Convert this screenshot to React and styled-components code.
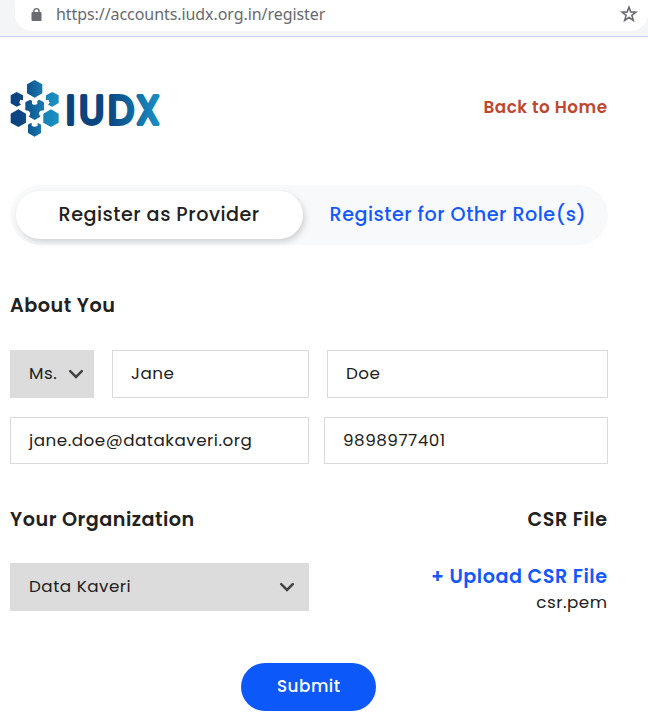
import React from "react";
import styled, { createGlobalStyle } from "styled-components";

const GlobalStyle = createGlobalStyle`
  *, *::before, *::after { box-sizing: border-box; }
  body {
    margin: 0;
    background: #fff;
    color: #212121;
    font-family: Poppins, Inter, sans-serif;
    overflow: hidden;
  }
  button { font: inherit; color: inherit; }
`;

const Page = styled.div`
  width: 648px;
  height: 716px;
  overflow: hidden;
`;

const BrowserBar = styled.div`
  height: 37px;
  padding-left: 15px;
  background: #f4f5f7;
  border-bottom: 1px solid #c7d2ea;
`;

const AddressField = styled.div`
  display: flex;
  align-items: flex-start;
  height: 31px;
  padding: 5px 10px 0 15px;
  background: #fff;
  border-radius: 0 0 17px 17px;
`;

const LockIcon = styled.svg`
  width: 13px;
  height: 16px;
  margin-top: 2px;
`;

const Url = styled.span`
  flex: 1;
  margin-left: 13px;
  font: 16px/19px "Noto Sans", sans-serif;
  letter-spacing: -0.07px;
  color: #666a70;
`;

const StarIcon = styled.svg`
  width: 18px;
  height: 18px;
`;

const Content = styled.main`
  width: 598px;
  margin-left: 10px;
`;

const Header = styled.header`
  display: flex;
  justify-content: space-between;
  align-items: center;
  height: 148px;
`;

const Logo = styled.svg`
  width: 155px;
  height: 66px;
  margin-top: -6px;
  overflow: visible;
`;

const Label = styled.span`
  display: inline-block;
  font-size: ${(p) => (p.$large ? 19.2 : 16.8)}px;
  font-weight: ${(p) => p.$weight || 400};
  line-height: 24px;
  letter-spacing: 0.5px;
  margin-right: -0.5px;
  white-space: nowrap;
`;

const HomeLink = styled.a`
  margin: -8px 1px 0 0;
  color: #bf4730;
`;

const Tabs = styled.nav`
  display: flex;
  height: 60px;
  padding: 6px;
  background: #f8f9fb;
  border-radius: 30px;
`;

const Tab = styled.div`
  display: flex;
  align-items: center;
  width: ${(p) => (p.$active ? 287 : 299)}px;
  padding-left: ${(p) => (p.$active ? 42.5 : 26.5)}px;
  height: 48px;
  border-radius: 24px;
  background: ${(p) => (p.$active ? "#fff" : "transparent")};
  color: ${(p) => (p.$active ? "#212121" : "#1358fa")};
  box-shadow: ${(p) => (p.$active ? "2px 3px 6px rgba(0, 0, 0, 0.16)" : "none")};
`;

const SectionHeading = styled.div`
  display: flex;
  justify-content: space-between;
  height: 24px;
  margin-top: ${(p) => p.$top}px;
  padding-right: 1px;
`;

const FieldRow = styled.div`
  display: grid;
  grid-template-columns: ${(p) => p.$columns};
  column-gap: ${(p) => p.$gap}px;
  margin-top: ${(p) => p.$top}px;
`;

const TextField = styled.div`
  display: flex;
  align-items: center;
  height: ${(p) => p.$height || 48}px;
  padding: 0 18px 2px;
  border: 1px solid #dadada;
`;

const SelectField = styled.div`
  display: flex;
  align-items: center;
  justify-content: space-between;
  height: 48px;
  padding: 0 ${(p) => p.$inset}px 2px 19px;
  background: #dcdcdc;
`;

const ChevronIcon = styled.svg`
  width: 16px;
  height: 10px;
  margin-top: 2px;
`;

const Upload = styled.div`
  display: flex;
  flex-direction: column;
  align-items: flex-end;
  height: 48px;
  padding: 2px 1px 0 0;
`;

const UploadLink = styled.a`
  height: 27px;
  color: #1358fa;
`;

const SubmitButton = styled.button`
  display: flex;
  align-items: center;
  justify-content: center;
  width: 135px;
  height: 48px;
  margin: 52px 0 0 231px;
  padding: 0 0 2px;
  border: 0;
  border-radius: 24px;
  background: #0d58f9;
  color: #fff;
`;

const Chevron = () => (
  <ChevronIcon viewBox="0 0 16 10" fill="none" stroke="#424242" strokeWidth="2.5" strokeLinecap="round">
    <path d="M2.2 2.2 8 8l5.8-5.8" />
  </ChevronIcon>
);

const IudxLogo = () => (
  <Logo viewBox="0 234 155 66" role="img" aria-label="IUDX">
    <defs>
      <linearGradient id="marks" gradientUnits="userSpaceOnUse" x1="22" y1="0" x2="170" y2="0">
        <stop offset="0" stopColor="#0b427c" />
        <stop offset="0.3" stopColor="#0c4783" />
        <stop offset="0.8" stopColor="#1785b8" />
        <stop offset="1" stopColor="#1b8fc3" />
      </linearGradient>
      <linearGradient id="word" gradientUnits="userSpaceOnUse" x1="61" y1="0" x2="164" y2="0">
        <stop offset="0" stopColor="#0b427c" />
        <stop offset="0.45" stopColor="#0c4783" />
        <stop offset="1" stopColor="#1b91c5" />
      </linearGradient>
    </defs>
    <g fill="url(#marks)" transform="translate(-10 229) scale(.3333)">
      <path d="M104 30 127 43v27l-23 13-23-13V43z" />
      <path d="M50 66 69 76v15l-8-2-3 9 5 6-13 6-18-10V76z" />
      <path d="m157 66 19 10v23l-19 11-13-6 5-6-4-9-7 2V76z" />
      <path d="m90 89 6 3v9q8 7 16 0v-9l6-3 14 8v24l-10 1q-8 6-3 14l2 4-17 10-17-10 2-4q5-9-4-14l-9-1V97z" />
      <path d="m55 118 23 13v27l-23 13-23-13v-27z" />
      <path d="m153 118 23 13v27l-23 13-23-13v-27z" />
      <path d="m88 161 7-3v9q9 6 18 0v-9l10 6v25l-19 11-20-11v-25z" />
    </g>
    <text
      x="60.9 75.2 106.6 137.6"
      y="283.1"
      transform="scale(.92 1)"
      fontFamily="Poppins, sans-serif"
      fontSize="40"
      fontWeight="400"
      fill="url(#word)"
      stroke="url(#word)"
      strokeWidth="3.9"
      strokeLinejoin="round"
    >
      IUDX
    </text>
  </Logo>
);

export default function App() {
  return (
    <>
      <GlobalStyle />
      <Page>
        <BrowserBar>
          <AddressField>
            <LockIcon viewBox="0 0 13 16">
              <path fill="#686b72" d="M2.5 5h8q1 0 1 1v7q0 1-1 1h-8q-1 0-1-1V6q0-1 1-1z" />
              <path fill="none" stroke="#686b72" strokeWidth="1.4" d="M3.9 6V4.2a2.6 2.6 0 0 1 5.2 0V6" />
            </LockIcon>
            <Url>https://accounts.iudx.org.in/register</Url>
            <StarIcon viewBox="0 0 18 18" fill="none" stroke="#686b72" strokeWidth="1.6">
              <path d="m9 2.2 1.8 4.7 5.1.3-4 3.2 1.4 4.9L9 12.5l-4.3 2.8 1.4-4.9-4-3.2 5.1-.3z" />
            </StarIcon>
          </AddressField>
        </BrowserBar>
        <Content>
          <Header>
            <IudxLogo />
            <HomeLink><Label $weight={600}>Back to Home</Label></HomeLink>
          </Header>
          <Tabs>
            <Tab $active><Label $large $weight={500}>Register as Provider</Label></Tab>
            <Tab><Label $large $weight={500}>Register for Other Role(s)</Label></Tab>
          </Tabs>
          <SectionHeading $top={49}>
            <Label $large $weight={600}>About You</Label>
          </SectionHeading>
          <FieldRow $top={32} $gap={18} $columns="84px 197px 281px">
            <SelectField $inset={10}><Label>Ms.</Label><Chevron /></SelectField>
            <TextField><Label>Jane</Label></TextField>
            <TextField><Label>Doe</Label></TextField>
          </FieldRow>
          <FieldRow $top={19} $gap={15} $columns="299px 284px">
            <TextField $height={47}><Label>jane.doe@datakaveri.org</Label></TextField>
            <TextField $height={47}><Label>9898977401</Label></TextField>
          </FieldRow>
          <SectionHeading $top={44}>
            <Label $large $weight={600}>Your Organization</Label>
            <Label $large $weight={600}>CSR File</Label>
          </SectionHeading>
          <FieldRow $top={31} $gap={0} $columns="299px 299px">
            <SelectField $inset={14}><Label>Data Kaveri</Label><Chevron /></SelectField>
            <Upload>
              <UploadLink><Label $large $weight={600}>+ Upload CSR File</Label></UploadLink>
              <Label>csr.pem</Label>
            </Upload>
          </FieldRow>
          <SubmitButton><Label $weight={500}>Submit</Label></SubmitButton>
        </Content>
      </Page>
    </>
  );
}
